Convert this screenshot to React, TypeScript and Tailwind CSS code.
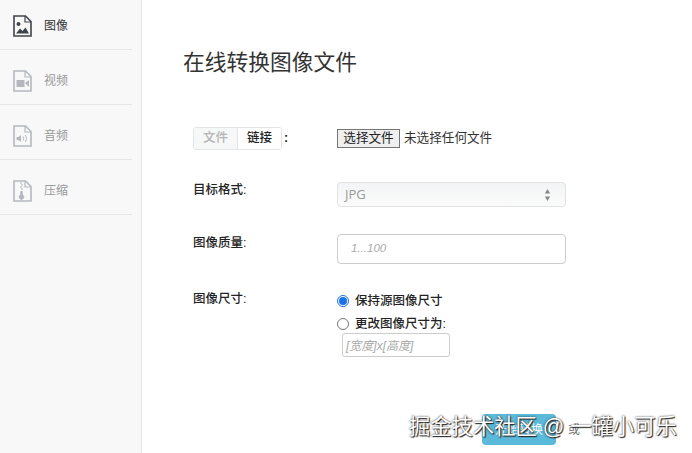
import React from 'react';

const FONT = "font-['Liberation_Sans','Noto_Sans_CJK_SC',sans-serif]";

const FileShell: React.FC<{ color: string; children: React.ReactNode }> = ({ color, children }) => (
  <svg width="19" height="22" viewBox="0 0 19 22" fill="none">
    <path d="M1 1h11.5L18 6.5V21H1z" stroke={color} strokeWidth="1.6" />
    <path d="M12 1v6h6" stroke={color} strokeWidth="1.2" />
    {children}
  </svg>
);

const ImageIcon = () => (
  <FileShell color="#3f444b">
    <circle cx="5.5" cy="9" r="2" fill="#3f444b" />
    <path d="M3 18.5l4-5 2.5 2.5 3-3.5 3.5 6z" fill="#3f444b" />
  </FileShell>
);

const VideoIcon = () => (
  <FileShell color="#b4b8be">
    <rect x="3.5" y="10" width="8" height="7" fill="#b4b8be" />
    <path d="M12 13l4-3v7z" fill="#b4b8be" />
  </FileShell>
);

const AudioIcon = () => (
  <FileShell color="#b4b8be">
    <path d="M3.5 12h2l2.5-2v7l-2.5-2h-2z" fill="#b4b8be" />
    <path d="M10 11.5q1.2 2 0 4M12.5 10q2 3.5 0 7" stroke="#b4b8be" strokeWidth="1" />
  </FileShell>
);

const ZipIcon = () => (
  <FileShell color="#b4b8be">
    <path d="M7 3h2M8 5h2M7 7h2M8 9h2" stroke="#b4b8be" strokeWidth="1" />
    <path d="M7.5 11h2l.5 4a2.6 2.6 0 1 1-3 0z" fill="#b4b8be" />
  </FileShell>
);

const NAV = [
  { label: '图像', icon: <ImageIcon />, active: true },
  { label: '视频', icon: <VideoIcon />, active: false },
  { label: '音频', icon: <AudioIcon />, active: false },
  { label: '压缩', icon: <ZipIcon />, active: false },
];

const App: React.FC = () => {
  return (
    <div className={`${FONT} relative flex h-[453px] w-[692px] overflow-hidden bg-white text-[#333]`}>
      {/* Sidebar */}
      <aside className="h-full w-[142px] shrink-0 border-r border-[#e6e6e6] bg-[#f8f8f9] pr-[9px]">
        {NAV.map(({ label, icon, active }) => (
          <div key={label} className="flex h-[55px] items-center gap-[12px] border-b border-[#e7e7e7] pt-[7px] pl-[13px] first:h-[50px] first:pt-[2px]">
            {icon}
            <span className={`text-[12px] ${active ? 'text-[#333]' : 'text-[#999]'}`}>{label}</span>
          </div>
        ))}
      </aside>

      {/* Main */}
      <main className="flex-1 pl-[41px]">
        <h1 className="mt-[48px] text-[21.75px] leading-[30px] font-normal text-[#333]">在线转换图像文件</h1>

        <div className="mt-[49px] ml-[10px] grid grid-cols-[144px_229px]">
          {/* File / link */}
          <div className="flex h-[23px] items-center text-[12.5px] font-medium text-[#222]">
            <div className="flex h-[23px] w-[89px] overflow-hidden rounded-[3px] border border-[#e2e4e7]">
              <span className="flex w-[44px] items-center justify-center border-r border-[#e2e4e7] bg-[#f6f7f7] text-[#b5b5b5]">文件</span>
              <span className="flex flex-1 items-center justify-center bg-white">链接</span>
            </div>
            <span className="ml-[2px] font-bold">:</span>
          </div>
          <div className="flex h-[23px] items-center text-[12.6px] text-[#333]">
            <span className="flex h-[19px] w-[63px] items-center justify-center border border-[#767676] bg-[#efefef] text-[#222]">选择文件</span>
            <span className="ml-[4px]">未选择任何文件</span>
          </div>

          {/* Format */}
          <div className="mt-[31px] text-[12.5px] leading-[18px] font-medium text-[#222]">目标格式:</div>
          <div className="mt-[32px] flex h-[25px] items-center justify-between rounded-[4px] border border-[#e0e2e4] bg-gradient-to-b from-[#f3f4f5] to-[#fbfbfb] pr-[14px] pl-[7px] font-['Open_Sans',sans-serif] text-[13px] text-[#999]">
            <span>JPG</span>
            <svg width="7" height="14" viewBox="0 0 7 14" fill="#888">
              <path d="M3.5 1l2.6 4.5H.9zM3.5 13L.9 8.5h5.2z" />
            </svg>
          </div>

          {/* Quality */}
          <div className="mt-[27px] text-[12.5px] leading-[18px] font-medium text-[#222]">图像质量:</div>
          <div className="mt-[27px] flex h-[30px] items-center rounded-[4px] border border-[#ccc] bg-white pl-[13px] text-[11.5px] text-[#aaa] italic">
            1...100
          </div>

          {/* Size */}
          <div className="mt-[26px] text-[12.5px] leading-[18px] font-medium text-[#222]">图像尺寸:</div>
          <div className="mt-[27px] text-[12.5px] font-medium text-[#222]">
            <div className="flex h-[18px] items-center gap-[6px] pt-[2px]">
              <span className="flex h-[12px] w-[12px] items-center justify-center rounded-full border border-[#1a73e8]">
                <span className="h-[8px] w-[8px] rounded-full bg-[#1a73e8]" />
              </span>
              <span>保持源图像尺寸</span>
            </div>
            <div className="mt-[5px] flex h-[18px] items-center gap-[6px] pt-[2px]">
              <span className="h-[12px] w-[12px] rounded-full border border-[#767676] bg-white" />
              <span>更改图像尺寸为:</span>
            </div>
            <div className="mt-[1px] ml-[5px] flex h-[24px] w-[108px] items-center rounded-[3px] border border-[#ccc] pt-[1px] pl-[3px] text-[12px] font-normal text-[#aaa] italic">
              [宽度]x[高度]
            </div>
          </div>
        </div>

        {/* Submit */}
        <div className="mt-[57px] ml-[299px] flex items-center">
          <div className="flex h-[31px] w-[74px] items-center justify-center rounded-[4px] bg-[#5bb9d9] text-[12px] text-white">开始转换</div>
          <span className="ml-[12px] text-[12px] text-[#777]">或</span>
        </div>
      </main>

      {/* Watermark */}
      <div className="absolute top-[413px] left-[409px] text-[21.3px] leading-[28px] whitespace-nowrap text-white [text-shadow:0_0_2px_#222,1px_1px_1px_#222]">
        掘金技术社区 @ 一罐小可乐
      </div>
    </div>
  );
};

export default App;
